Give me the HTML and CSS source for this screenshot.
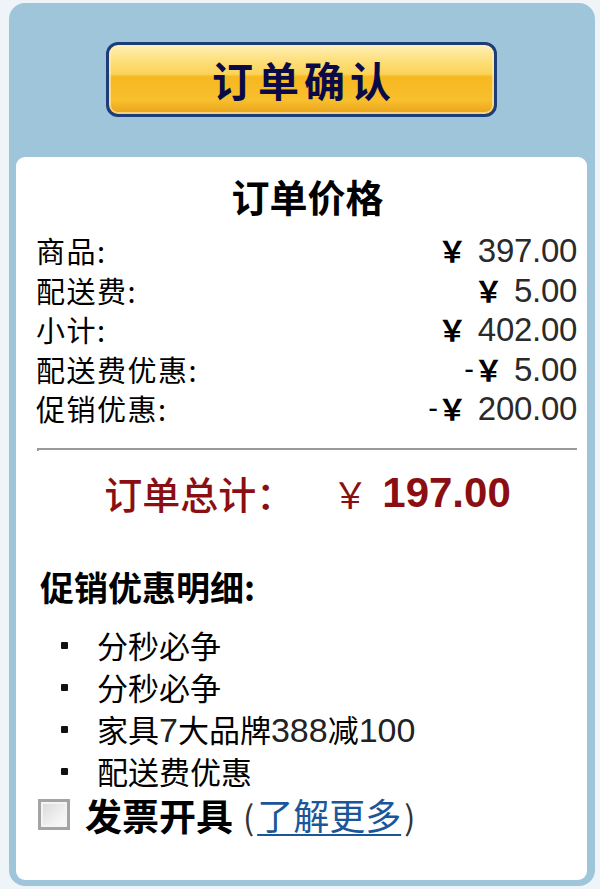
FILE: index.html
```html
<!DOCTYPE html>
<html lang="zh-CN">
<head>
<meta charset="utf-8">
<title>订单确认</title>
<link rel="stylesheet" href="styles.css">
</head>
<body>
<div class="panel">
  <button class="confirm-btn" type="button">订单确认</button>
  <div class="card">
    <div class="card-title">订单价格</div>
    <div class="rows">
      <div class="row"><span class="label">商品:</span><span class="value"><span class="yen">￥</span><span class="num">397.00</span></span></div>
      <div class="row"><span class="label">配送费:</span><span class="value"><span class="yen">￥</span><span class="num">5.00</span></span></div>
      <div class="row"><span class="label">小计:</span><span class="value"><span class="yen">￥</span><span class="num">402.00</span></span></div>
      <div class="row"><span class="label">配送费优惠:</span><span class="value"><span class="minus">-</span><span class="yen">￥</span><span class="num">5.00</span></span></div>
      <div class="row"><span class="label">促销优惠:</span><span class="value"><span class="minus">-</span><span class="yen">￥</span><span class="num">200.00</span></span></div>
    </div>
    <div class="sep"></div>
    <div class="total"><span class="total-label">订单总计：</span><span class="total-yen">￥</span><span class="total-num">197.00</span></div>
    <div class="promo-title">促销优惠明细:</div>
    <ul class="promo-list">
      <li>分秒必争</li>
      <li>分秒必争</li>
      <li>家具<span class="lat">7</span>大品牌<span class="lat">388</span>减<span class="lat">100</span></li>
      <li>配送费优惠</li>
    </ul>
    <div class="invoice">
      <span class="checkbox"></span>
      <span class="invoice-label">发票开具</span>
      <span class="more">(<a href="#" class="more-link">了解更多</a>)</span>
    </div>
  </div>
</div>
</body>
</html>
```

FILE: styles.css
```css
html, body {
  margin: 0;
  padding: 0;
  background: #eef4f8;
}
body {
  font-family: "Noto Sans CJK SC", "Liberation Sans", sans-serif;
  color: #000;
  width: 600px;
  height: 889px;
  overflow: hidden;
}
.panel {
  margin: 3px 5px 0 9px;
  height: 883px;
  box-sizing: border-box;
  background: #9fc5db;
  border-radius: 16px;
  padding: 39px 8px 6px 7px;
  display: flex;
  flex-direction: column;
}
.confirm-btn {
  align-self: flex-start;
  margin-left: 90px;
  width: 391px;
  height: 75px;
  box-sizing: border-box;
  border: 3px solid #1e3d78;
  border-radius: 12px;
  background: linear-gradient(to bottom, #fff0b8 0%, #fddf7c 22%, #fbd35a 42%, #f7b820 46%, #f8bf2e 80%, #e9a21a 100%);
  box-shadow: inset 0 0 0 2px rgba(255, 240, 190, 0.6);
  font-family: "Noto Sans CJK SC", sans-serif;
  font-weight: 700;
  font-size: 41px;
  letter-spacing: 5px;
  color: #0a0a48;
  padding: 0 0 0 5px;
  line-height: 1;
  cursor: pointer;
}
.card {
  margin-top: 40px;
  flex: 1;
  background: #fff;
  border-radius: 9px;
  padding: 17px 10px 0 20px;
}
.card-title {
  text-align: center;
  font-weight: 700;
  font-size: 38px;
  line-height: 44px;
  padding-left: 2px;
}
.rows {
  margin-top: 13px;
}
.row {
  display: flex;
  justify-content: space-between;
  align-items: center;
  height: 39.5px;
  font-size: 29px;
}
.label {
  line-height: 39.5px;
  letter-spacing: 1.5px;
}
.value {
  display: flex;
  align-items: center;
  line-height: 39.5px;
}
.minus {
  font-family: "Liberation Sans", sans-serif;
  font-size: 29px;
}
.yen {
  font-family: "Noto Sans CJK SC", sans-serif;
  font-weight: 700;
  font-size: 29px;
  color: #000;
}
.num {
  font-family: "Liberation Sans", sans-serif;
  font-size: 33px;
  color: #2a2a2a;
  margin-left: 11px;
  letter-spacing: -0.3px;
}
.sep {
  margin-top: 19px;
  margin-left: 1px;
  height: 3px;
  border-top: 2px solid #9a9a9a;
  border-left: 2px solid #9a9a9a;
  box-sizing: border-box;
}
.total {
  margin-top: 17px;
  display: flex;
  justify-content: center;
  align-items: center;
  color: #8a0e12;
  height: 50px;
  line-height: 50px;
  padding-left: 2px;
}
.total-label {
  font-size: 38px;
  font-weight: 500;
}
.total-yen {
  font-size: 36px;
  margin-left: 38px;
}
.total-num {
  font-family: "Liberation Sans", sans-serif;
  font-weight: 700;
  font-size: 42px;
  margin-left: 14px;
}
.promo-title {
  margin-top: 49px;
  margin-left: 4px;
  font-weight: 700;
  font-size: 34px;
  line-height: 40px;
}
.promo-list {
  list-style: none;
  margin: 17px 0 0 0;
  padding: 0 0 0 61px;
}
.promo-list li {
  position: relative;
  font-size: 31px;
  line-height: 42px;
  height: 42px;
}
.promo-list li::before {
  content: "";
  position: absolute;
  left: -36px;
  top: 18px;
  width: 7px;
  height: 7px;
  border-radius: 1px;
  background: #111;
}
.lat {
  font-family: "Liberation Sans", sans-serif;
  font-size: 34px;
  color: #222;
}
.invoice {
  display: flex;
  align-items: center;
  height: 44px;
  line-height: 44px;
  margin-top: 1px;
  margin-left: 2px;
}
.checkbox {
  width: 32px;
  height: 31px;
  box-sizing: border-box;
  border: 3px solid #a4a4a4;
  background: linear-gradient(135deg, #d8d8d8 0%, #f0f0f0 60%, #fbfbfb 100%);
  box-shadow: inset 0 0 0 2px #f4f4f4;
  margin-right: 15px;
}
.invoice-label {
  font-weight: 700;
  font-size: 37px;
  margin-right: 10px;
}
.more {
  font-size: 33px;
  color: #333;
}
.more-link {
  color: #1a5699;
  text-decoration: underline;
  text-underline-offset: 4px;
  text-decoration-thickness: 2px;
  font-size: 36px;
  padding: 0 3px;
}
```
